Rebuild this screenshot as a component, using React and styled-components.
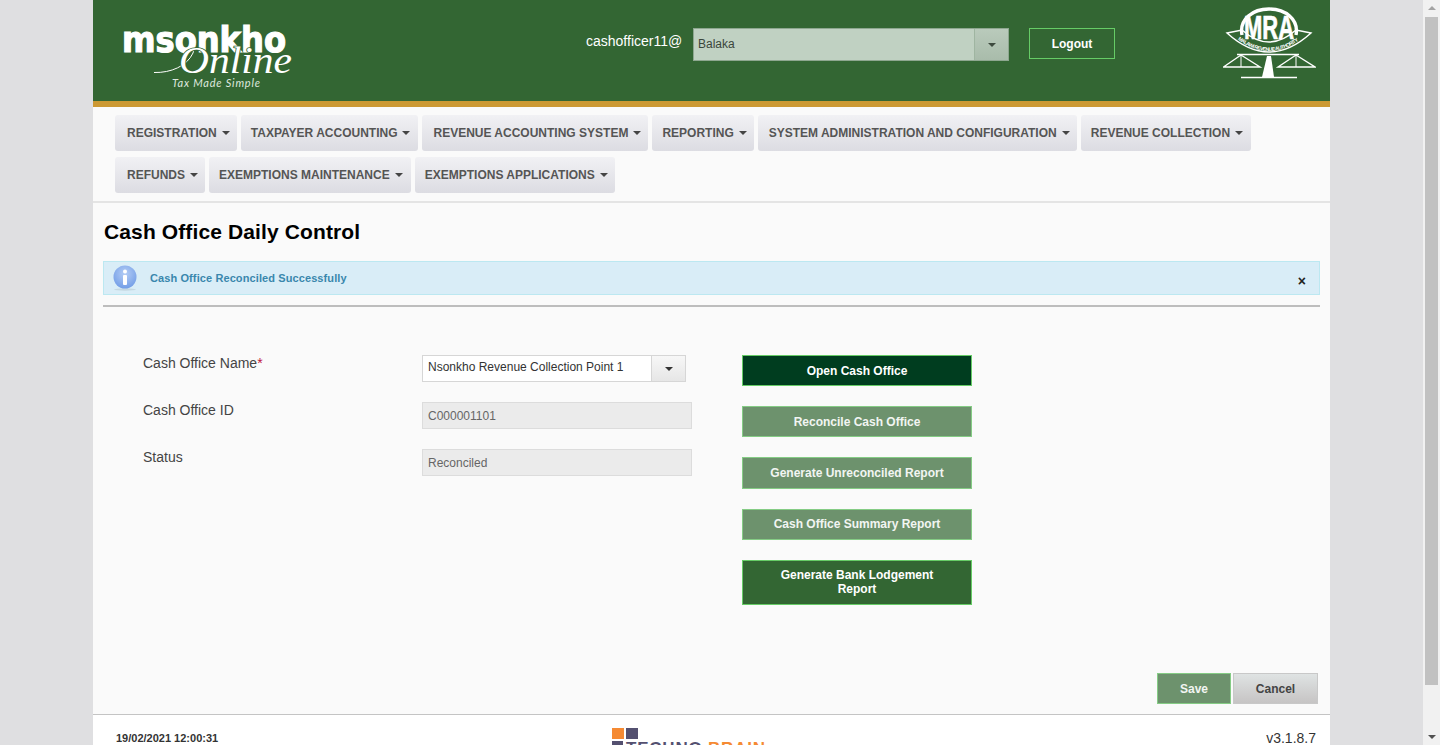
import React from 'react';
import styled, { createGlobalStyle } from 'styled-components';

const GlobalStyle = createGlobalStyle`
  html, body {
    margin: 0;
    padding: 0;
    height: 745px;
    overflow: hidden;
    background: #dfdfe1;
    font-family: "Liberation Sans", Arial, sans-serif;
  }
`;

const Page = styled.div`
  width: 1237px;
  height: 745px;
  margin-left: 93px;
  display: flex;
  flex-direction: column;
  overflow: hidden;
  background: #fafafa;
`;

const Header = styled.header`
  flex: none;
  height: 101px;
  background: #336633;
  border-bottom: 6px solid #cc9933;
  display: flex;
  align-items: flex-start;
  padding: 0 14px 0 28px;
`;

const LogoBox = styled.div`
  width: 175px;
  margin-top: 26px;
  line-height: 0;
`;

const UserArea = styled.div`
  display: flex;
  align-items: flex-start;
  margin: 28px 0 0 290px;
`;

const UserName = styled.span`
  color: #fff;
  font-size: 14px;
  line-height: 16px;
  margin-top: 5px;
  width: 107px;
`;

const LocationSelect = styled.div`
  width: 316px;
  height: 33px;
  box-sizing: border-box;
  display: flex;
  background: #c0d1c2;
  border: 1px solid #8ea790;
  color: #3a463b;
  font-size: 12px;
`;

const SelectText = styled.span`
  flex: 1;
  padding-left: 4px;
  line-height: 31px;
`;

const LocationCaret = styled.span`
  width: 34px;
  box-sizing: border-box;
  display: flex;
  align-items: center;
  justify-content: center;
  border-left: 1px solid #9fb5a1;
  background: linear-gradient(#b9cabb, #a9bcab);
`;

const Caret = styled.i`
  display: inline-block;
  width: 0;
  height: 0;
  border-left: 4px solid transparent;
  border-right: 4px solid transparent;
  border-top: 4px solid ${p => p.$color || '#444'};
  margin-left: ${p => p.$gap || 0}px;
`;

const LogoutButton = styled.button`
  width: 86px;
  height: 31px;
  margin-left: 20px;
  background: #336633;
  border: 1px solid #66cc66;
  color: #fff;
  font: bold 12px "Liberation Sans", Arial, sans-serif;
  padding: 0;
`;

const Emblem = styled.div`
  margin-left: auto;
  margin-top: 7px;
  line-height: 0;
`;

const Nav = styled.nav`
  flex: none;
  height: 86px;
  background: #fafafa;
  border-bottom: 2px solid #e4e4e4;
  padding: 8px 22px 0;
  display: flex;
  flex-wrap: wrap;
  align-content: flex-start;
  column-gap: 4px;
  row-gap: 6px;
`;

const MenuItem = styled.div`
  height: 36px;
  box-sizing: border-box;
  padding: 0 ${p => p.$right}px 0 ${p => p.$left}px;
  display: flex;
  align-items: center;
  border-radius: 3px;
  background: linear-gradient(#f1f1f4, #dcdce2);
  color: #555;
  font-size: 12px;
  font-weight: bold;
  white-space: nowrap;
`;

const Content = styled.main`
  flex: none;
  height: 512px;
  box-sizing: border-box;
  padding: 0 10px;
  display: flex;
  flex-direction: column;
  border-bottom: 1px solid #c4c4c4;
`;

const Title = styled.h1`
  margin: 17px 0 0 1px;
  font-size: 21px;
  line-height: 24px;
  font-weight: bold;
  letter-spacing: 0.12px;
  color: #000;
`;

const Alert = styled.div`
  margin-top: 17px;
  height: 34px;
  box-sizing: border-box;
  display: flex;
  align-items: center;
  padding: 0 12px 0 9px;
  background: #d9edf7;
  border: 1px solid #bce8f1;
  color: #3a87ad;
  font-size: 11px;
  font-weight: bold;
`;

const AlertText = styled.span`
  margin-left: 13px;
  flex: 1;
  letter-spacing: 0.1px;
`;

const Close = styled.span`
  color: #222;
  font-size: 14px;
  font-weight: bold;
  margin-top: 6px;
  margin-right: 1px;
`;

const Rule = styled.hr`
  margin: 10px 0 0;
  border: 0;
  height: 2px;
  background: #bdbdbd;
`;

const FormArea = styled.section`
  display: flex;
  align-items: flex-start;
  margin-top: 48px;
  padding-left: 40px;
`;

const Fields = styled.div`
  width: 549px;
  display: grid;
  grid-template-columns: 279px 270px;
  row-gap: 20px;
`;

const Label = styled.label`
  font-size: 14px;
  line-height: 16px;
  color: #444;
`;

const Star = styled.span`
  color: #c0143c;
`;

const FieldCell = styled.div`
  height: 27px;
`;

const SelectField = styled.div`
  width: 264px;
  height: 27px;
  box-sizing: border-box;
  display: flex;
  background: #fff;
  border: 1px solid #d6d6d6;
  color: #333;
  font-size: 12px;
`;

const SelectValue = styled.span`
  flex: 1;
  padding-left: 5px;
  line-height: 22px;
`;

const SelectCaret = styled.span`
  width: 34px;
  box-sizing: border-box;
  display: flex;
  align-items: center;
  justify-content: center;
  border-left: 1px solid #d6d6d6;
  background: linear-gradient(#f7f7f7, #e6e6e6);
`;

const ReadOnly = styled.div`
  height: 27px;
  box-sizing: border-box;
  padding-left: 5px;
  background: #ebebeb;
  border: 1px solid #dcdcdc;
  color: #666;
  font-size: 12px;
  line-height: 27px;
`;

const Actions = styled.div`
  width: 230px;
  margin-left: 50px;
  display: flex;
  flex-direction: column;
  gap: 20px;
`;

const tones = {
  open: '#003d1f',
  faded: '#6d926d',
  solid: '#336633',
};

const ActionButton = styled.button`
  width: 230px;
  height: ${p => p.$height || 31}px;
  padding: 0 20px ${p => (p.$lift ? 2 : 0)}px;
  background: ${p => tones[p.$tone]};
  border: 1px solid;
  border-color: ${p => (p.$tone === 'faded' ? '#85cc85' : '#66cc66')};
  color: ${p => (p.$tone === 'faded' ? '#f2f5f2' : '#fff')};
  font: bold 12px/14px "Liberation Sans", Arial, sans-serif;
`;

const BottomBar = styled.div`
  margin-top: auto;
  margin-bottom: 10px;
  display: flex;
  justify-content: flex-end;
  gap: 2px;
  padding-right: 2px;
`;

const SaveButton = styled.button`
  width: 74px;
  height: 31px;
  padding: 0;
  background: #6d926d;
  border: 1px solid #85cc85;
  color: #f2f5f2;
  font: bold 12px "Liberation Sans", Arial, sans-serif;
`;

const CancelButton = styled.button`
  width: 85px;
  height: 31px;
  padding: 0;
  background: linear-gradient(#dfe3e3, #c6c4c4);
  border: 1px solid #c8c8c8;
  color: #444;
  font: bold 12px "Liberation Sans", Arial, sans-serif;
`;

const Footer = styled.footer`
  flex: none;
  height: 60px;
  background: #fff;
  display: grid;
  grid-template-columns: 496px 1fr auto;
  padding: 0 14px 0 23px;
`;

const DateText = styled.span`
  font-size: 11px;
  line-height: 13px;
  font-weight: bold;
  color: #333;
  margin-top: 17px;
`;

const VendorLogo = styled.div`
  margin-top: 13px;
  line-height: 0;
`;

const Version = styled.span`
  font-size: 14px;
  color: #333;
  margin-top: 15px;
`;

const ScrollBar = styled.div`
  position: fixed;
  top: 0;
  right: 0;
  width: 17px;
  height: 745px;
  background: #f1f1f1;
  display: flex;
  flex-direction: column;
  align-items: center;
`;

const ScrollArrow = styled.i`
  flex: none;
  width: 0;
  height: 0;
  margin: 6px 0;
  border-left: 4px solid transparent;
  border-right: 4px solid transparent;
  ${p => (p.$down ? 'border-top: 4px solid #505050;' : 'border-bottom: 4px solid #a3a3a3;')}
`;

const ScrollThumb = styled.div`
  width: 13px;
  height: 668px;
  margin-top: 1px;
  background: #c1c1c1;
`;

const ScrollGap = styled.div`
  flex: 1;
`;

const MsonkhoLogo = () => (
  <svg width="175" height="66" viewBox="0 0 175 66" style={{ overflow: 'visible' }}>
    <text x="1" y="26" textLength="164" lengthAdjust="spacingAndGlyphs" fontFamily="DejaVu Sans" fontWeight="bold" fontSize="35" fill="#fff" stroke="#fff" strokeWidth="1.2">msonkho</text>
    <path d="M33 46.5 C50 47 66 40 72 27 C74 22 69 19 65 24 C60 31 60 41 66 45" fill="none" stroke="#fff" strokeWidth="1" />
    <text x="58" y="47" textLength="113" lengthAdjust="spacingAndGlyphs" fontFamily="Liberation Serif" fontStyle="italic" fontSize="38" fill="#fff" stroke="#336633" strokeWidth="1.6" paintOrder="stroke">Online</text>
    <text x="51" y="61" textLength="88" fontFamily="Lato" fontStyle="italic" fontSize="11" fill="#dfe8df">Tax Made Simple</text>
  </svg>
);

const MraEmblem = () => (
  <svg width="93" height="72" viewBox="0 0 93 72" fill="none">
    <path d="M19 28 C16 12 30 2 46 2 C62 2 76 12 73 28" stroke="#fff" strokeWidth="3.4" />
    <text x="46" y="32" textAnchor="middle" textLength="50" lengthAdjust="spacingAndGlyphs" fontFamily="Liberation Sans" fontWeight="bold" fontSize="33" fill="#fff" stroke="#fff" strokeWidth="0.7">MRA</text>
    <path d="M4 26 L19 23 Q46 47 73 23 L88 26 Q46 64 4 26Z" stroke="#fff" strokeWidth="1.4" />
    <path id="mra-arc" d="M13 31 Q46 57 79 31" stroke="none" />
    <text fontFamily="Liberation Sans" fontWeight="bold" fontSize="5.2" fill="#fff">
      <textPath href="#mra-arc" startOffset="3%" textLength="66">MALAWI REVENUE AUTHORITY</textPath>
    </text>
    <path d="M14 47.5 H76" stroke="#fff" strokeWidth="1.6" />
    <path d="M0.5 60 L18 48 L37 60 Z M55 60 L73 48 L92 60 Z" stroke="#fff" strokeWidth="1.4" />
    <path d="M18 48 V60 M73 48 V60" stroke="#fff" strokeWidth="1" />
    <path d="M44 49 H48 L51 70 H39 Z" fill="#fff" />
    <path d="M18 70.5 H74" stroke="#fff" strokeWidth="1.6" />
  </svg>
);

const TechnoBrainLogo = () => (
  <svg width="160" height="30" viewBox="0 0 160 30">
    <rect x="0" y="0" width="12" height="11" fill="#f58a33" />
    <rect x="14" y="0" width="12" height="11" fill="#545070" />
    <rect x="0" y="13" width="11" height="10" fill="#545070" />
    <text x="14" y="26" textLength="139" fontFamily="Liberation Sans" fontWeight="bold" fontSize="17" fill="#545070">TECHNO <tspan fill="#f58a33">BRAIN</tspan></text>
  </svg>
);

const menuItems = [
  { label: 'REGISTRATION', left: 12, right: 7 },
  { label: 'TAXPAYER ACCOUNTING', left: 10, right: 8 },
  { label: 'REVENUE ACCOUNTING SYSTEM', left: 11, right: 7 },
  { label: 'REPORTING', left: 10, right: 7 },
  { label: 'SYSTEM ADMINISTRATION AND CONFIGURATION', left: 11, right: 7 },
  { label: 'REVENUE COLLECTION', left: 10, right: 8 },
  { label: 'REFUNDS', left: 12, right: 7 },
  { label: 'EXEMPTIONS MAINTENANCE', left: 10, right: 8 },
  { label: 'EXEMPTIONS APPLICATIONS', left: 10, right: 7 },
];

const App = () => (
  <>
    <GlobalStyle />
    <Page>
      <Header>
        <LogoBox>
          <MsonkhoLogo />
        </LogoBox>
        <UserArea>
          <UserName>cashofficer11@</UserName>
          <LocationSelect>
            <SelectText>Balaka</SelectText>
            <LocationCaret><Caret $color="#3d4a3e" /></LocationCaret>
          </LocationSelect>
          <LogoutButton>Logout</LogoutButton>
        </UserArea>
        <Emblem>
          <MraEmblem />
        </Emblem>
      </Header>
      <Nav>
        {menuItems.map(item => (
          <MenuItem key={item.label} $left={item.left} $right={item.right}>
            {item.label}
            <Caret $gap={5} $color="#444" />
          </MenuItem>
        ))}
      </Nav>
      <Content>
        <Title>Cash Office Daily Control</Title>
        <Alert>
          <svg width="24" height="26" viewBox="0 0 24 26">
            <defs>
              <radialGradient id="info-fill" cx="50%" cy="35%" r="70%">
                <stop offset="0%" stopColor="#b4cdf5" />
                <stop offset="100%" stopColor="#6f9be6" />
              </radialGradient>
            </defs>
            <ellipse cx="12" cy="24.5" rx="11" ry="1.2" fill="#c5d8e2" />
            <circle cx="12" cy="12" r="11.5" fill="url(#info-fill)" />
            <circle cx="12" cy="6.5" r="2" fill="#fff" />
            <rect x="10" y="10" width="4" height="10" rx="1" fill="#fff" />
          </svg>
          <AlertText>Cash Office Reconciled Successfully</AlertText>
          <Close>×</Close>
        </Alert>
        <Rule />
        <FormArea>
          <Fields>
            <Label>Cash Office Name<Star>*</Star></Label>
            <FieldCell>
              <SelectField>
                <SelectValue>Nsonkho Revenue Collection Point 1</SelectValue>
                <SelectCaret><Caret $color="#333" /></SelectCaret>
              </SelectField>
            </FieldCell>
            <Label>Cash Office ID</Label>
            <ReadOnly>C000001101</ReadOnly>
            <Label>Status</Label>
            <ReadOnly>Reconciled</ReadOnly>
          </Fields>
          <Actions>
            <ActionButton $tone="open">Open Cash Office</ActionButton>
            <ActionButton $tone="faded">Reconcile Cash Office</ActionButton>
            <ActionButton $tone="faded" $height={32}>Generate Unreconciled Report</ActionButton>
            <ActionButton $tone="faded" $lift>Cash Office Summary Report</ActionButton>
            <ActionButton $tone="solid" $height={45} $lift>Generate Bank Lodgement<br />Report</ActionButton>
          </Actions>
        </FormArea>
        <BottomBar>
          <SaveButton>Save</SaveButton>
          <CancelButton>Cancel</CancelButton>
        </BottomBar>
      </Content>
      <Footer>
        <DateText>19/02/2021 12:00:31</DateText>
        <VendorLogo>
          <TechnoBrainLogo />
        </VendorLogo>
        <Version>v3.1.8.7</Version>
      </Footer>
    </Page>
    <ScrollBar>
      <ScrollArrow />
      <ScrollThumb />
      <ScrollGap />
      <ScrollArrow $down />
    </ScrollBar>
  </>
);

export default App;
